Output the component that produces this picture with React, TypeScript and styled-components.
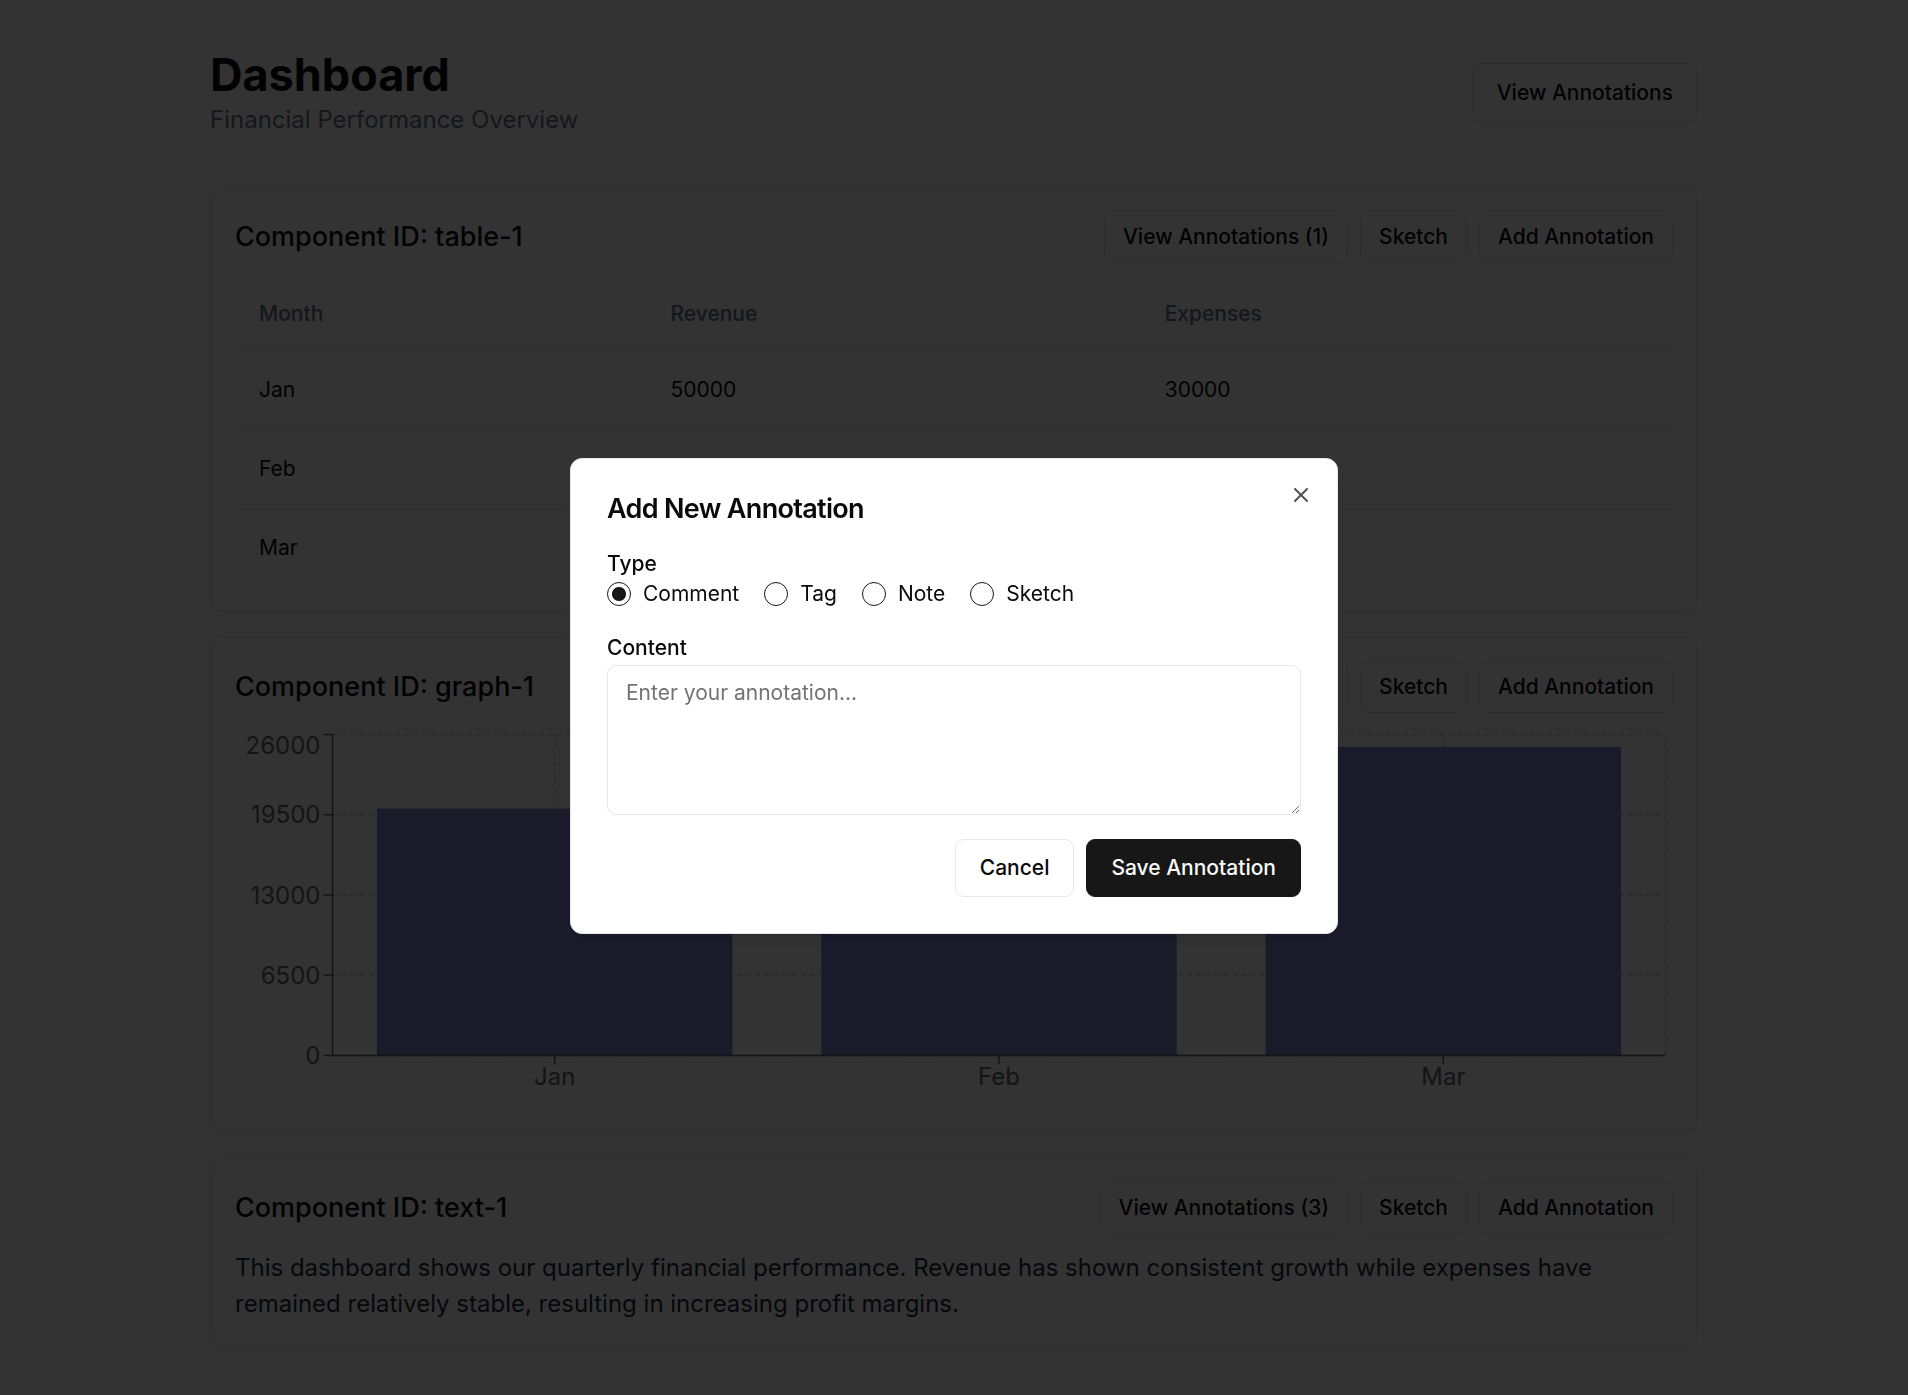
import React from "react";
import styled, { createGlobalStyle } from "styled-components";
import { X } from "lucide-react";

const GlobalStyle = createGlobalStyle`
  * { box-sizing: border-box; }
  html, body { margin: 0; padding: 0; background: #ffffff; }
  body {
    font-family: Inter, "Noto Sans", "Liberation Sans", sans-serif;
    color: #0a0a0a;
    font-size: 24px;
    line-height: 1.5;
  }
`;

const Page = styled.main`
  max-width: 1488px;
  margin: 0 auto;
  padding: 48px 0 40px;
`;

const PageHeader = styled.header`
  display: flex;
  justify-content: space-between;
  align-items: center;
  margin-bottom: 48px;
`;

const Title = styled.h1`
  margin: 0;
  font-size: 45px;
  line-height: 54px;
  font-weight: 700;
  color: #0a0a0a;
`;

const Subtitle = styled.p`
  margin: 0;
  font-size: 24px;
  line-height: 36px;
  color: #6b7280;
`;

const Button = styled.button<{ $size?: "md" | "sm" | "lg"; $variant?: "outline" | "primary" }>`
  display: inline-flex;
  align-items: center;
  justify-content: center;
  height: ${(p) => (p.$size === "sm" ? "52px" : p.$size === "lg" ? "58px" : "60px")};
  padding: 0 ${(p) => (p.$size === "sm" ? "18px" : "24px")};
  border-radius: 9px;
  border: 1px solid ${(p) => (p.$variant === "primary" ? "#171717" : "#e5e7eb")};
  background: ${(p) => (p.$variant === "primary" ? "#171717" : "#ffffff")};
  color: ${(p) => (p.$variant === "primary" ? "#fafafa" : "#0a0a0a")};
  font-family: inherit;
  font-size: 21px;
  line-height: 30px;
  font-weight: 500;
  white-space: nowrap;
  cursor: pointer;
`;

const CardList = styled.div`
  display: flex;
  flex-direction: column;
  gap: 24px;
`;

const Card = styled.section`
  background: #ffffff;
  border: 1px solid #e5e7eb;
  border-radius: 12px;
  padding: 24px;
  box-shadow: 0 1px 2px rgba(0, 0, 0, 0.05);
`;

const CardHeader = styled.div<{ $gap: number }>`
  display: flex;
  justify-content: space-between;
  align-items: center;
  margin-bottom: ${(p) => p.$gap}px;
`;

const CardTitle = styled.h2`
  margin: 0;
  font-size: 27px;
  line-height: 42px;
  font-weight: 500;
  color: #0a0a0a;
`;

const Actions = styled.div`
  display: flex;
  gap: 12px;
`;

const Table = styled.table`
  width: 100%;
  border-collapse: collapse;
  font-size: 21px;
  line-height: 30px;
`;

const HeadRow = styled.tr`
  border-bottom: 1px solid #e5e7eb;
`;

const BodyRow = styled.tr`
  border-bottom: 1px solid #e5e7eb;
  &:last-child { border-bottom: 0; }
`;

const Th = styled.th`
  height: 63px;
  padding: 12px 24px 0;
  text-align: left;
  font-weight: 500;
  color: #6b7280;
  vertical-align: top;
`;

const Td = styled.td`
  padding: 24px;
  color: #0a0a0a;
`;

const ChartSvg = styled.svg`
  display: block;
  width: 100%;
  height: 381px;
  font-family: Inter, "Noto Sans", "Liberation Sans", sans-serif;
  font-size: 24px;
  overflow: visible;
`;

const Paragraph = styled.p`
  margin: 0;
  font-size: 24px;
  line-height: 36px;
  color: #1f2937;
`;

const Overlay = styled.div`
  position: fixed;
  inset: 0;
  background: rgba(0, 0, 0, 0.8);
  z-index: 50;
`;

const Dialog = styled.div`
  position: fixed;
  left: 50%;
  top: calc(50% - 2px);
  transform: translate(-50%, -50%);
  width: 768px;
  display: grid;
  gap: 24px;
  padding: 36px;
  background: #ffffff;
  border: 1px solid #e5e7eb;
  border-radius: 12px;
  box-shadow: 0 10px 15px -3px rgba(0, 0, 0, 0.1), 0 4px 6px -4px rgba(0, 0, 0, 0.1);
  z-index: 51;
`;

const DialogTitle = styled.h2`
  margin: 0;
  font-size: 27px;
  line-height: 27px;
  font-weight: 600;
  letter-spacing: -0.025em;
  color: #0a0a0a;
`;

const CloseButton = styled.button`
  position: absolute;
  top: 24px;
  right: 24px;
  width: 24px;
  height: 24px;
  padding: 0;
  border: 0;
  background: none;
  color: #0a0a0a;
  opacity: 0.7;
  display: flex;
  align-items: center;
  justify-content: center;
  cursor: pointer;
`;

const Form = styled.form`
  display: grid;
  gap: 24px;
`;

const Field = styled.div<{ $gap: number }>`
  display: grid;
  gap: ${(p) => p.$gap}px;
`;

const FieldLabel = styled.label<{ $offset?: number }>`
  display: block;
  padding-top: ${(p) => p.$offset ?? 0}px;
  font-size: 21px;
  line-height: 30px;
  font-weight: 500;
  color: #0a0a0a;
`;

const RadioGroup = styled.div`
  display: flex;
  gap: 25px;
`;

const RadioOption = styled.label`
  display: flex;
  align-items: center;
  gap: 12px;
  font-size: 21px;
  line-height: 30px;
  color: #0a0a0a;
`;

const RadioInput = styled.input`
  appearance: none;
  margin: 0;
  width: 24px;
  height: 24px;
  border-radius: 50%;
  border: 1.5px solid #171717;
  background: #ffffff;
  &:checked {
    background: radial-gradient(circle, #171717 6.5px, #ffffff 7.5px);
  }
`;

const Textarea = styled.textarea`
  display: block;
  width: 100%;
  height: 150px;
  padding: 12px 18px;
  border: 1px solid #e5e7eb;
  border-radius: 9px;
  font-family: inherit;
  font-size: 21px;
  line-height: 30px;
  color: #0a0a0a;
  resize: vertical;
  outline: none;
  &::placeholder { color: #737373; }
`;

const Footer = styled.div`
  display: flex;
  justify-content: flex-end;
  gap: 12px;
`;

const tableData = [
  { month: "Jan", revenue: 50000, expenses: 30000 },
  { month: "Feb", revenue: 55000, expenses: 32000 },
  { month: "Mar", revenue: 60000, expenses: 35000 },
];

const chartData = [
  { month: "Jan", value: 20000 },
  { month: "Feb", value: 23000 },
  { month: "Mar", value: 25000 },
];

function BarChart() {
  const W = 1438;
  const H = 381;
  const m = 7.5;
  const left = m + 90;
  const right = W - m;
  const top = m;
  const bottom = H - m - 45;
  const max = 26000;
  const ticks = [0, 6500, 13000, 19500, 26000];
  const yOf = (v: number) => bottom - (v / max) * (bottom - top);
  const band = (right - left) / chartData.length;
  const centers = chartData.map((_, i) => left + band * (i + 0.5));
  const dash = "4.5 4.5";
  return (
    <ChartSvg viewBox={`0 0 ${W} ${H}`}>
      <g stroke="#cccccc" strokeDasharray={dash} strokeWidth={1.5}>
        {ticks.map((t) => (
          <line key={t} x1={left} x2={right} y1={yOf(t)} y2={yOf(t)} />
        ))}
        {centers.map((c) => (
          <line key={c} x1={c} x2={c} y1={top} y2={bottom} />
        ))}
        <line x1={right} x2={right} y1={top} y2={bottom} />
      </g>
      {chartData.map((d, i) => (
        <rect
          key={d.month}
          x={left + band * i + band * 0.1}
          width={band * 0.8}
          y={yOf(d.value)}
          height={bottom - yOf(d.value)}
          fill="#8884d8"
        />
      ))}
      <g stroke="#666666" strokeWidth={1.5}>
        <line x1={left} x2={left} y1={top} y2={bottom} />
        <line x1={left} x2={right} y1={bottom} y2={bottom} />
        {ticks.map((t) => (
          <line key={t} x1={left - 9} x2={left} y1={yOf(t)} y2={yOf(t)} />
        ))}
        {centers.map((c) => (
          <line key={c} x1={c} x2={c} y1={bottom} y2={bottom + 9} />
        ))}
      </g>
      <g fill="#666666">
        {ticks.map((t) => (
          <text
            key={t}
            x={left - 12}
            y={yOf(t) + (t === max ? 11 : 0)}
            dy="0.355em"
            textAnchor="end"
          >
            {t}
          </text>
        ))}
        {chartData.map((d, i) => (
          <text key={d.month} x={centers[i]} y={bottom + 12} dy="0.71em" textAnchor="middle">
            {d.month}
          </text>
        ))}
      </g>
    </ChartSvg>
  );
}

function ComponentCard({
  id,
  count,
  gap,
  children,
}: {
  id: string;
  count?: number;
  gap: number;
  children: React.ReactNode;
}) {
  return (
    <Card>
      <CardHeader $gap={gap}>
        <CardTitle>Component ID: {id}</CardTitle>
        <Actions>
          {count !== undefined && <Button $size="sm">View Annotations ({count})</Button>}
          <Button $size="sm">Sketch</Button>
          <Button $size="sm">Add Annotation</Button>
        </Actions>
      </CardHeader>
      {children}
    </Card>
  );
}

const types = ["Comment", "Tag", "Note", "Sketch"];

export default function App() {
  return (
    <>
      <GlobalStyle />
      <Page>
        <PageHeader>
          <div>
            <Title>Dashboard</Title>
            <Subtitle>Financial Performance Overview</Subtitle>
          </div>
          <Button>View Annotations</Button>
        </PageHeader>
        <CardList>
          <ComponentCard id="table-1" count={1} gap={24}>
            <Table>
              <thead>
                <HeadRow>
                  <Th>Month</Th>
                  <Th>Revenue</Th>
                  <Th>Expenses</Th>
                </HeadRow>
              </thead>
              <tbody>
                {tableData.map((r) => (
                  <BodyRow key={r.month}>
                    <Td>{r.month}</Td>
                    <Td>{r.revenue}</Td>
                    <Td>{r.expenses}</Td>
                  </BodyRow>
                ))}
              </tbody>
            </Table>
          </ComponentCard>
          <ComponentCard id="graph-1" count={2} gap={14}>
            <BarChart />
          </ComponentCard>
          <ComponentCard id="text-1" count={3} gap={16}>
            <Paragraph>
              This dashboard shows our quarterly financial performance. Revenue has shown consistent
              growth while expenses have remained relatively stable, resulting in increasing profit
              margins.
            </Paragraph>
          </ComponentCard>
        </CardList>
      </Page>
      <Overlay />
      <Dialog role="dialog">
        <DialogTitle>Add New Annotation</DialogTitle>
        <Form onSubmit={(e) => e.preventDefault()}>
          <Field $gap={0}>
            <FieldLabel as="div" $offset={3}>
              Type
            </FieldLabel>
            <RadioGroup>
              {types.map((t, i) => (
                <RadioOption key={t}>
                  <RadioInput type="radio" name="type" value={t} defaultChecked={i === 0} />
                  {t}
                </RadioOption>
              ))}
            </RadioGroup>
          </Field>
          <Field $gap={2}>
            <FieldLabel htmlFor="content">Content</FieldLabel>
            <Textarea id="content" placeholder="Enter your annotation..." />
          </Field>
        </Form>
        <Footer>
          <Button $variant="outline" $size="lg">
            Cancel
          </Button>
          <Button $variant="primary" $size="lg">
            Save Annotation
          </Button>
        </Footer>
        <CloseButton aria-label="Close">
          <X size={24} strokeWidth={2} />
        </CloseButton>
      </Dialog>
    </>
  );
}
